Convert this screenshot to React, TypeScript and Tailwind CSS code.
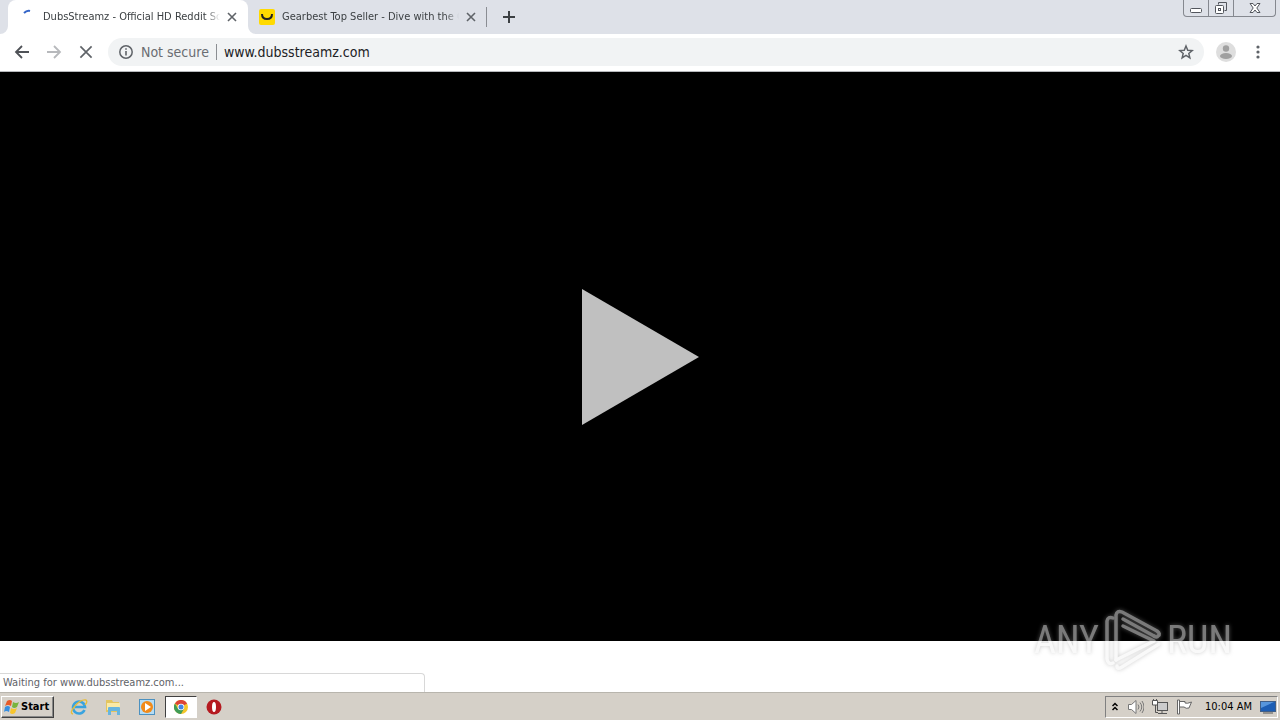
import { useState } from "react";

const stroke = { fill: "none", stroke: "currentColor" } as const;

function CloseIcon({ size, width }: { size: number; width: number }) {
  return (
    <svg width={size} height={size} viewBox="0 0 10 10" {...stroke} strokeWidth={width} aria-hidden="true">
      <path d="M1 1l8 8M9 1l-8 8" />
    </svg>
  );
}

function TabStrip() {
  return (
    <div className="flex h-[34px] items-start bg-[#dee1e8] pl-2 text-[11px] text-[#3c4043]">
      <div className="relative flex h-[34px] w-60 items-center rounded-t-lg bg-white pr-2 pl-[13px]">
        <svg className="absolute bottom-0 -left-2" width="8" height="8" aria-hidden="true"><path d="M8 0v8H0a8 8 0 0 0 8-8" fill="#fff" /></svg>
        <svg className="absolute -right-2 bottom-0" width="8" height="8" aria-hidden="true"><path d="M0 0v8h8a8 8 0 0 1-8-8" fill="#fff" /></svg>
        <svg className="mr-[6px] shrink-0" width="16" height="16" {...stroke} strokeWidth="2" aria-hidden="true"><path d="M3 4q3-3 6-2" stroke="#3465c8" /></svg>
        <span className="flex-1 overflow-hidden pt-px whitespace-nowrap [mask-image:linear-gradient(to_right,black_92%,transparent)]">DubsStreamz - Official HD Reddit Soccer</span>
        <button aria-label="Close tab" className="ml-1 grid size-4 place-items-center text-[#5f6368]"><CloseIcon size={10} width={1.6} /></button>
      </div>
      <div className="flex h-[34px] w-[239px] items-center pr-2 pl-[11px]">
        <svg className="mr-[7px] shrink-0" width="16" height="16" aria-hidden="true">
          <rect width="16" height="16" rx="2" fill="#ffda00" />
          <path d="M3 5q0 5 5 5t5-5" fill="none" stroke="#222" strokeWidth="2" />
        </svg>
        <span className="flex-1 overflow-hidden pt-px whitespace-nowrap [mask-image:linear-gradient(to_right,black_92%,transparent)]">Gearbest Top Seller - Dive with the Ocean</span>
        <button aria-label="Close tab" className="ml-1 grid size-4 place-items-center text-[#5f6368]"><CloseIcon size={10} width={1.6} /></button>
        <span className="-mr-2 ml-[7px] h-5 w-px bg-[#8a8d93]" />
      </div>
      <button aria-label="New tab" className="ml-2 grid h-[34px] w-7 place-items-center text-[#3c4043]">
        <svg width="12" height="12" {...stroke} strokeWidth="2" aria-hidden="true"><path d="M6 0v12M0 6h12" /></svg>
      </button>
      <div className="mr-1 ml-auto flex h-[17px] rounded-b border border-t-0 border-[#85888f] text-[#53565d]">
        <button aria-label="Minimize" className="grid w-[25px] place-items-center border-r border-[#85888f]">
          <svg width="12" height="12" {...stroke} aria-hidden="true"><rect x=".5" y="6.500" width="11" height="4" rx="1" fill="#fff" /></svg>
        </button>
        <button aria-label="Restore" className="grid w-[25px] place-items-center border-r border-[#85888f]">
          <svg width="14" height="14" {...stroke} aria-hidden="true"><path d="M4.500 3.500v-2h8v8h-2" /><rect x="1.500" y="4.500" width="8" height="8" rx="1" fill="#fff" /><rect x="4.500" y="7.500" width="2" height="2" /></svg>
        </button>
        <button aria-label="Close window" className="grid w-[41px] place-items-center">
          <svg width="12" height="12" {...stroke} aria-hidden="true"><path fill="#fff" d="M1 1.500h3l2 2.500 2-2.500h3L7.800 6l3.200 4.500H8L6 8l-2 2.500H1L4.200 6z" /></svg>
        </button>
      </div>
    </div>
  );
}

function Toolbar() {
  const [url, setUrl] = useState("www.dubsstreamz.com");
  return (
    <div className="flex h-[38px] items-center border-b border-[#b6b8bc] bg-white px-[14px] pb-px text-sm">
      <button aria-label="Back" className="grid size-4 place-items-center text-[#4f5257]">
        <svg width="16" height="16" {...stroke} strokeWidth="1.800" aria-hidden="true"><path d="M15 8H2M8 2L2 8l6 6" /></svg>
      </button>
      <button aria-label="Forward" className="ml-4 grid size-4 place-items-center text-[#b7b9bc]">
        <svg width="16" height="16" {...stroke} strokeWidth="1.800" aria-hidden="true"><path d="M1 8h13M8 2l6 6-6 6" /></svg>
      </button>
      <button aria-label="Stop loading" className="ml-4 grid size-4 place-items-center text-[#5f6368]"><CloseIcon size={14} width={1.2} /></button>
      <div className="ml-[14px] flex h-7 flex-1 items-center rounded-full bg-[#f1f3f4] pr-[10px] pl-[11px]">
        <svg width="14" height="14" {...stroke} strokeWidth="1.500" className="text-[#5f6368]" aria-hidden="true"><circle cx="7" cy="7" r="6.200" /><path d="M7 6v4.500M7 3.300v1.500" strokeWidth="1.600" /></svg>
        <label htmlFor="address" className="ml-2 text-[#6a6d72]">Not secure</label>
        <span className="mx-[7px] h-4 w-px bg-[#8b8e92]" />
        <input id="address" value={url} onChange={(e) => setUrl(e.target.value)} className="min-w-0 flex-1 bg-transparent text-[#202124] outline-none" />
        <button aria-label="Bookmark this page" className="grid size-4 place-items-center text-[#5f6368]">
          <svg width="16" height="16" viewBox="0 0 24 24" {...stroke} strokeWidth="2.200" aria-hidden="true"><path d="M12 3l2.600 6.300 6.700.5-5.100 4.400 1.600 6.600L12 17.200l-5.800 3.600 1.600-6.600L2.700 9.800l6.700-.5z" /></svg>
        </button>
      </div>
      <button aria-label="Profile" className="ml-3">
        <svg width="20" height="20" aria-hidden="true"><circle cx="10" cy="10" r="10" fill="#dedede" /><circle cx="10" cy="6.500" r="3.200" fill="#a0a0a0" /><ellipse cx="10" cy="14" rx="6" ry="3" fill="#a0a0a0" /></svg>
      </button>
      <button aria-label="Menu" className="ml-[14px] grid size-4 place-items-center">
        <svg width="4" height="14" fill="#5f6368" aria-hidden="true"><circle cx="2" cy="2" r="1.600" /><circle cx="2" cy="7" r="1.600" /><circle cx="2" cy="12" r="1.600" /></svg>
      </button>
    </div>
  );
}

function Watermark() {
  return (
    <div className="pointer-events-none absolute right-12 bottom-5 flex h-16 items-center gap-[5px] font-['Roboto_Condensed','Roboto',sans-serif] text-[38px] leading-none text-[#f4f4f4] opacity-50 drop-shadow-[0_0_2px_#999]">
      <span>ANY</span>
      <svg width="58" height="62" viewBox="0 0 58 62" fill="none" stroke="#f4f4f4" strokeWidth="3.500" strokeLinejoin="round" strokeLinecap="round" aria-hidden="true">
        <path d="M9 9Q4 7 3 12V50Q4 56 9 54" />
        <path d="M12 51V6Q13 1 18 3L53 22Q57 25 54 27Q53 29 50 27" />
        <path d="M50 27L19 10M19 17L50 32L12 51M55 35L18 58Q13 61 13 57" />
      </svg>
      <span>RUN</span>
    </div>
  );
}

function Taskbar() {
  return (
    <footer className="flex h-7 items-center border-t border-[#b8b5ad] bg-[#d5d0c8] pr-[2px] pl-px text-[11px] text-black">
      <button className="flex h-[22px] w-[53px] items-center gap-px border border-t-white border-r-[#404040] border-b-[#404040] border-l-white pl-[2px] font-bold shadow-[inset_-1px_-1px_#888]">
        <svg width="16" height="16" className="shrink-0" aria-hidden="true"><path d="M3 2q3-2 5 0L7 7Q4 5 1 7z" fill="#e65a28" /><path d="M9 3q3 2 6 0l-2 5q-3 2-5 0z" fill="#78b43c" /><path d="M1 8q3-2 5 0l-1 5q-3-2-5 0z" fill="#368ee0" /><path d="M7 9q3 2 6 0l-2 5q-3 2-5 0z" fill="#f7c52c" /></svg>
        <span className="pt-px">Start</span>
      </button>
      <nav className="ml-2 flex items-center" aria-label="Programs">
        <button aria-label="Internet Explorer" className="grid h-[22px] w-[34px] place-items-center"><svg width="18" height="18" fill="none" aria-hidden="true"><path d="M14.500 12A6 6 0 1 1 15 9H5" stroke="#39a3df" strokeWidth="2.600" /><path d="M3 16q-4-1 2-8T16 2q2 2-1 5" stroke="#e8bd38" strokeWidth="1.300" /></svg></button>
        <button aria-label="Windows Explorer" className="grid h-[22px] w-[34px] place-items-center"><svg width="16" height="16" aria-hidden="true"><path d="M1 1h6l1 2h6v10H1z" fill="#e3c560" /><path d="M2 4h13v7H2z" fill="#faeaa6" /><path d="M3 16V9q0-1 1-1h10q1 0 1 1v7h-3v-4H6v4z" fill="#67b5df" /></svg></button>
        <button aria-label="Media Player" className="grid h-[22px] w-[34px] place-items-center"><svg width="16" height="16" aria-hidden="true"><rect x=".5" y=".5" width="15" height="15" fill="#b5dcf4" stroke="#4c91c0" /><circle cx="8" cy="8" r="6" fill="#f18a19" /><path d="M6 4l6 4-6 4z" fill="#fff" /></svg></button>
        <button aria-label="Chrome" className="ml-px grid h-[22px] w-8 place-items-center border border-t-[#404040] border-r-white border-b-white border-l-[#404040] bg-white"><svg width="14" height="14" viewBox="0 0 14 14" aria-hidden="true"><circle cx="7" cy="7" r="7" fill="#f4c62a" /><path d="M7 7L.9 3.500a7 7 0 0 1 12.200 0z" fill="#dc4437" /><path d="M.9 3.500A7 7 0 0 0 7 14l3-5.200L4 8.700z" fill="#3f9c57" /><circle cx="7" cy="7" r="3.300" fill="#fff" /><circle cx="7" cy="7" r="2.500" fill="#4285e4" /></svg></button>
        <button aria-label="Opera" className="grid h-[22px] w-[34px] place-items-center"><svg width="16" height="16" aria-hidden="true"><circle cx="8" cy="8" r="7.500" fill="#b51a20" /><ellipse cx="8" cy="8" rx="2" ry="5" fill="#fff" /></svg></button>
      </nav>
      <div className="ml-auto flex h-[22px] items-center border border-t-[#808080] border-r-white border-b-white border-l-[#808080] pr-px pl-[6px]">
        <button aria-label="Show hidden icons"><svg width="6" height="10" {...stroke} strokeWidth="1.500" aria-hidden="true"><path d="M.5 4L3 1.500 5.500 4M.5 8L3 5.500 5.500 8" /></svg></button>
        <svg className="ml-[10px]" width="16" height="16" {...stroke} stroke="#777" aria-hidden="true"><path d="M.5 5.500h3L8 1.500v13l-4.500-4h-3z" fill="#fff" /><path d="M10 5.500q2 2.500 0 5M12 3.500q3.500 4.500 0 9M14 2q4 6 0 12" /></svg>
        <svg className="ml-2" width="16" height="16" {...stroke} stroke="#555" aria-hidden="true"><rect x="5.500" y="3.500" width="10" height="8" fill="#ccc" /><path d="M6 14.500h9M10 12v2M3.500 6v7.500H6" /><path d="M.5 1.500h5V6h-5zM1.500 0v1M4.500 0v1" fill="#fff" /></svg>
        <svg className="ml-2" width="16" height="16" {...stroke} stroke="#666" aria-hidden="true"><path d="M1.500 1h2v14h-2zM3.500 2.500H9v1.500q2 1 6.500-1L13 9q-3 1-5-1H3.500" fill="#fff" /></svg>
        <time className="ml-[13px] pt-px">10:04 AM</time>
        <svg className="ml-2" width="16" height="14" aria-hidden="true"><rect x=".5" y="1.500" width="15" height="10" fill="#1d5eb4" stroke="#405f88" /><path d="M1 2h13L1 8z" fill="#5796dc" /><path d="M3 13h10" stroke="#555" /></svg>
      </div>
    </footer>
  );
}

export default function App() {
  return (
    <div className="flex h-screen flex-col overflow-hidden bg-white font-['DejaVu_Sans_Condensed','Noto_Sans',sans-serif]">
      <header><TabStrip /><Toolbar /></header>
      <main className="relative flex flex-1 flex-col">
        <section className="grid flex-1 place-items-center bg-black">
          <button aria-label="Play"><svg width="117" height="136" className="block" aria-hidden="true"><path d="M0 0l117 68L0 136z" fill="#c0c0c0" /></svg></button>
        </section>
        <div className="flex h-[51px] items-end">
          <p className="flex h-[19px] w-[425px] items-center rounded-tr-sm border-t border-r border-[#d8d8d8] pt-px pl-[3px] text-[11px] text-[#5f6368]">Waiting for www.dubsstreamz.com...</p>
        </div>
        <Watermark />
      </main>
      <Taskbar />
    </div>
  );
}
